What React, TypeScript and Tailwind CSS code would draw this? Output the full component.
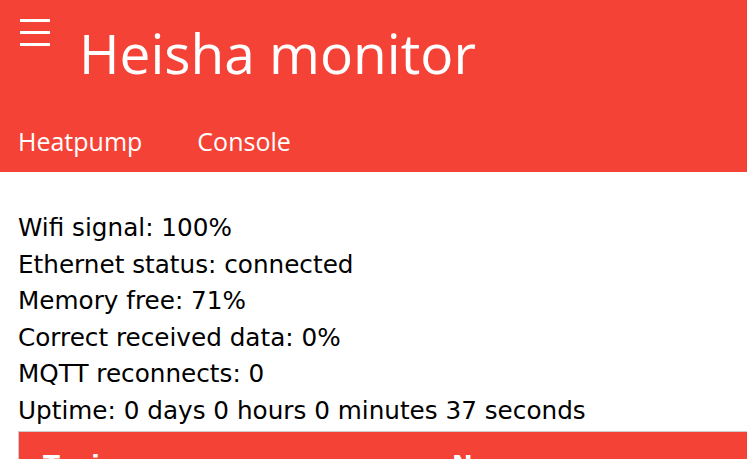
const STATS = [
  "Wifi signal: 100%",
  "Ethernet status: connected",
  "Memory free: 71%",
  "Correct received data: 0%",
  "MQTT reconnects: 0",
  "Uptime: 0 days 0 hours 0 minutes 37 seconds",
];

function Hamburger() {
  return (
    <svg width="30" height="27" viewBox="0 0 30 27" className="shrink-0">
      <rect x="0" y="0" width="30" height="3" fill="#fff" />
      <rect x="0" y="12" width="30" height="3" fill="#fff" />
      <rect x="0" y="24" width="30" height="3" fill="#fff" />
    </svg>
  );
}

export default function App() {
  return (
    <div className="w-[747px] h-[459px] overflow-hidden bg-white text-black">
      {/* Header */}
      <header className="h-[172px] bg-[#f44336] text-white font-['Open_Sans',sans-serif]">
        <div className="flex items-start pl-[20px] pt-[19px]">
          <Hamburger />
          <h1 className="ml-[29px] mt-[6px] text-[55px] leading-none font-normal">
            Heisha monitor
          </h1>
        </div>
        <nav className="flex gap-[55px] pl-[18px] mt-[49px] text-[25px] leading-none">
          <a>Heatpump</a>
          <a>Console</a>
        </nav>
      </header>

      {/* Status */}
      <div className="pt-[38px] pl-[18px] font-['DejaVu_Sans',Verdana,sans-serif] text-[24.7px] leading-[36.5px]">
        {STATS.map((line) => (
          <div key={line} className="whitespace-nowrap">
            {line}
          </div>
        ))}

        <div className="mt-[2px] w-[1200px] border border-[#ccc]">
          <div className="flex bg-[#f44336] text-white font-bold">
            <div className="w-[421px] pl-[24px] pt-[15px] pb-[12px]">Topic</div>
            <div className="w-[300px] pl-[12px] pt-[15px] pb-[12px]">Name</div>
            <div className="w-[200px] pl-[12px] pt-[15px] pb-[12px]">Value</div>
            <div className="pl-[12px] pt-[15px] pb-[12px]">Description</div>
          </div>
        </div>
      </div>
    </div>
  );
}
